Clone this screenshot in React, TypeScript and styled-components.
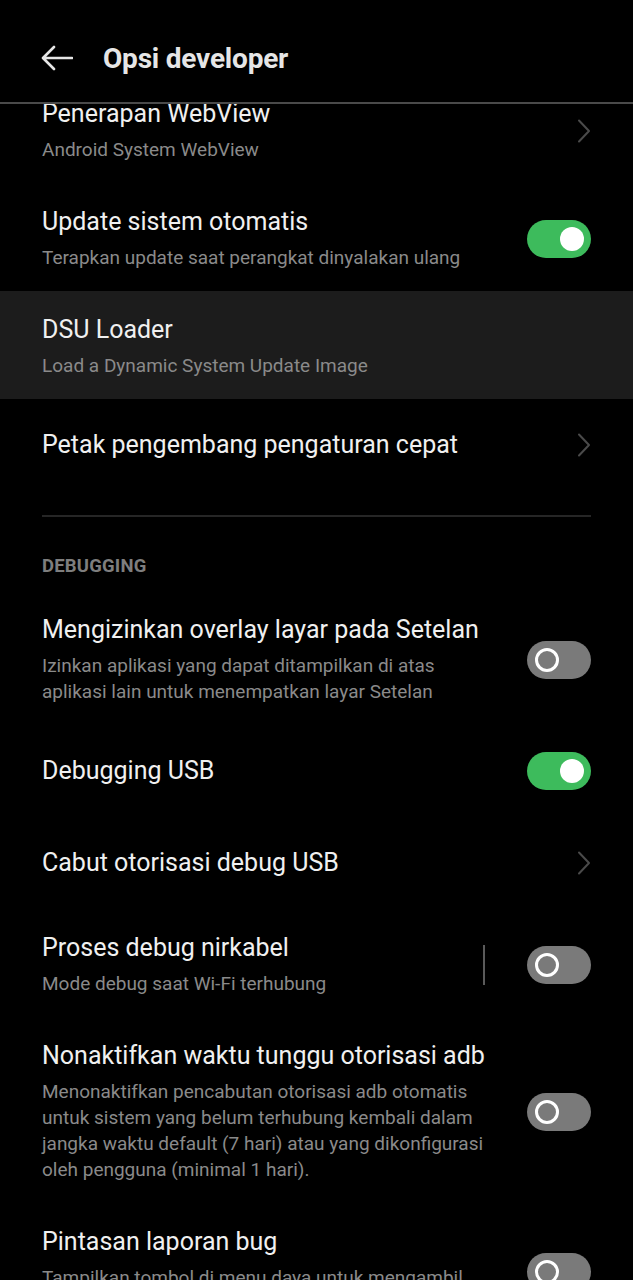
import React from "react";
import styled, { createGlobalStyle } from "styled-components";

const Global = createGlobalStyle`
  html, body { margin: 0; padding: 0; background: #000; }
  body { font-family: Roboto, "Noto Sans", Arial, sans-serif; -webkit-font-smoothing: antialiased; }
  * { box-sizing: border-box; }
`;

const Screen = styled.div`
  width: 633px;
  height: 1280px;
  background: #000;
  display: flex;
  flex-direction: column;
  overflow: hidden;
`;

const Header = styled.header`
  height: 104px;
  flex: 0 0 auto;
  display: flex;
  align-items: center;
  gap: 30px;
  padding: 14px 0 0 41px;
  border-bottom: 2px solid #4a4a4a;
  position: relative;
  z-index: 2;
  background: #000;
`;

const HeaderTitle = styled.h1`
  margin: 0;
  font-size: 28px;
  font-weight: 700;
  color: #e6e6e6;
  letter-spacing: -0.2px;
`;

const Scroller = styled.div`
  flex: 1;
  overflow: hidden;
`;

const List = styled.div`
  margin-top: -29px;
  display: flex;
  flex-direction: column;
`;

const Row = styled.div<{ $highlight?: boolean; $single?: boolean }>`
  display: flex;
  align-items: center;
  padding: ${(p) => (p.$single ? "0 42px" : "24px 42px 20px")};
  min-height: ${(p) => (p.$single ? "92px" : "auto")};
  background: ${(p) => (p.$highlight ? "#1c1c1c" : "transparent")};
`;

const TextCol = styled.div`
  flex: 1;
  display: flex;
  flex-direction: column;
  gap: 8px;
  min-width: 0;
`;

const Title = styled.div`
  font-size: 25px;
  line-height: 30px;
  color: #f0f0f0;
  white-space: nowrap;
`;

const Subtitle = styled.div<{ $maxWidth?: number }>`
  font-size: 19px;
  line-height: 26px;
  color: #8a8a8a;
  max-width: ${(p) => (p.$maxWidth ? `${p.$maxWidth}px` : "none")};
`;

const Trailing = styled.div`
  display: flex;
  align-items: center;
  gap: 42px;
  flex: 0 0 auto;
`;

const VLine = styled.div`
  width: 2px;
  height: 40px;
  background: #5a5a5a;
`;

const Track = styled.div<{ $on: boolean }>`
  width: 64px;
  height: 38px;
  border-radius: 19px;
  background: ${(p) => (p.$on ? "#3dbb5c" : "#7a7a7a")};
  display: flex;
  align-items: center;
  justify-content: ${(p) => (p.$on ? "flex-end" : "flex-start")};
  padding: 0 7px 0 8px;
`;

const Knob = styled.div<{ $on: boolean }>`
  width: 24px;
  height: 24px;
  border-radius: 50%;
  background: ${(p) => (p.$on ? "#fff" : "#7a7a7a")};
  border: ${(p) => (p.$on ? "none" : "3.5px solid #fff")};
`;

const Divider = styled.div`
  margin: 24px 42px 0;
  height: 2px;
  background: #262626;
`;

const Category = styled.div`
  padding: 38px 42px 14px;
  font-size: 18.5px;
  line-height: 22px;
  font-weight: 700;
  color: #7e7e7e;
  letter-spacing: 0.2px;
`;

const Toggle = ({ on }: { on: boolean }) => (
  <Track $on={on}>
    <Knob $on={on} />
  </Track>
);

const Chevron = () => (
  <svg width="14" height="24" viewBox="0 0 14 24" fill="none">
    <path d="M2 1.5 L12 12 L2 22.5" stroke="#4a4a4a" strokeWidth="2" strokeLinecap="round" strokeLinejoin="round" />
  </svg>
);

const BackArrow = () => (
  <svg width="32" height="26" viewBox="0 0 32 26" fill="none">
    <path d="M31 13 H2.5 M13 2 L2 13 L13 24" stroke="#e6e6e6" strokeWidth="2.6" strokeLinecap="round" strokeLinejoin="round" />
  </svg>
);

type Item = {
  title: string;
  sub?: string;
  subWidth?: number;
  trailing?: "chevron" | "on" | "off" | "off-line";
  highlight?: boolean;
};

const SettingRow = ({ item }: { item: Item }) => (
  <Row $highlight={item.highlight} $single={!item.sub}>
    <TextCol>
      <Title>{item.title}</Title>
      {item.sub && <Subtitle $maxWidth={item.subWidth}>{item.sub}</Subtitle>}
    </TextCol>
    {item.trailing && (
      <Trailing>
        {item.trailing === "chevron" && <Chevron />}
        {item.trailing === "on" && <Toggle on />}
        {item.trailing === "off" && <Toggle on={false} />}
        {item.trailing === "off-line" && (
          <>
            <VLine />
            <Toggle on={false} />
          </>
        )}
      </Trailing>
    )}
  </Row>
);

const topItems: Item[] = [
  { title: "Penerapan WebView", sub: "Android System WebView", trailing: "chevron" },
  { title: "Update sistem otomatis", sub: "Terapkan update saat perangkat dinyalakan ulang", trailing: "on" },
  { title: "DSU Loader", sub: "Load a Dynamic System Update Image", highlight: true },
  { title: "Petak pengembang pengaturan cepat", trailing: "chevron" },
];

const debugItems: Item[] = [
  {
    title: "Mengizinkan overlay layar pada Setelan",
    sub: "Izinkan aplikasi yang dapat ditampilkan di atas aplikasi lain untuk menempatkan layar Setelan",
    subWidth: 410,
    trailing: "off",
  },
  { title: "Debugging USB", trailing: "on" },
  { title: "Cabut otorisasi debug USB", trailing: "chevron" },
  { title: "Proses debug nirkabel", sub: "Mode debug saat Wi-Fi terhubung", trailing: "off-line" },
  {
    title: "Nonaktifkan waktu tunggu otorisasi adb",
    sub: "Menonaktifkan pencabutan otorisasi adb otomatis untuk sistem yang belum terhubung kembali dalam jangka waktu default (7 hari) atau yang dikonfigurasi oleh pengguna (minimal 1 hari).",
    subWidth: 460,
    trailing: "off",
  },
  {
    title: "Pintasan laporan bug",
    sub: "Tampilkan tombol di menu daya untuk mengambil laporan bug",
    subWidth: 440,
    trailing: "off",
  },
];

export default function App() {
  return (
    <>
      <Global />
      <Screen>
        <Header>
          <BackArrow />
          <HeaderTitle>Opsi developer</HeaderTitle>
        </Header>
        <Scroller>
          <List>
            {topItems.map((it) => (
              <SettingRow key={it.title} item={it} />
            ))}
            <Divider />
            <Category>DEBUGGING</Category>
            {debugItems.map((it) => (
              <SettingRow key={it.title} item={it} />
            ))}
          </List>
        </Scroller>
      </Screen>
    </>
  );
}
